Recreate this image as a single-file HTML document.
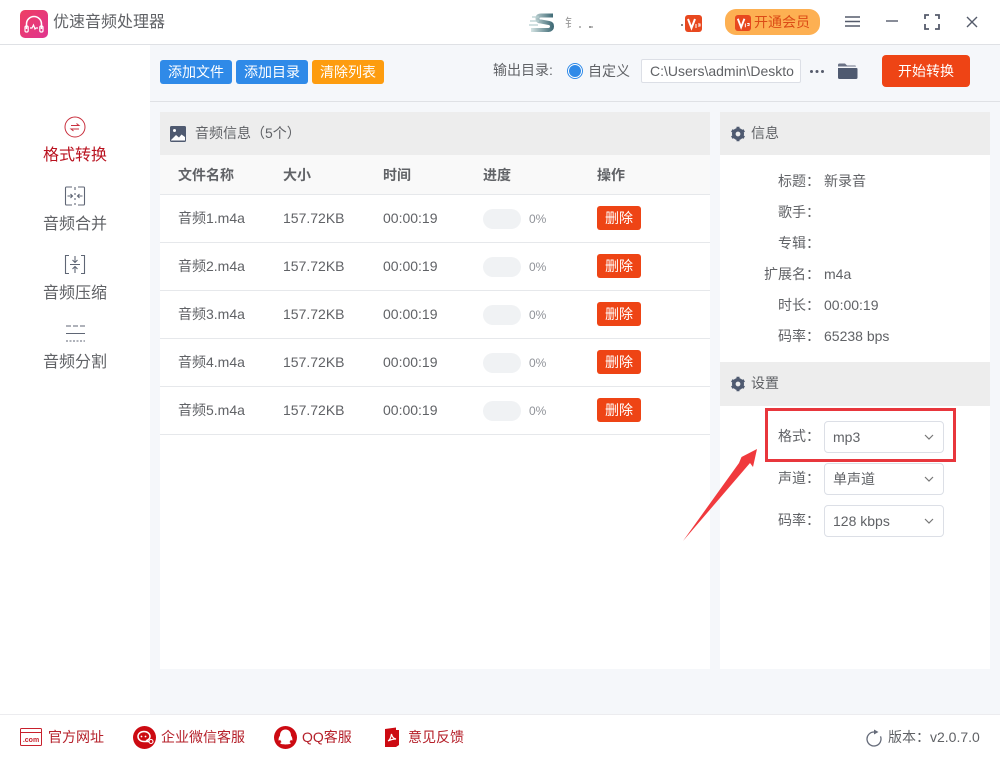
<!DOCTYPE html>
<html lang="zh-CN"><head><meta charset="utf-8"><title>优速音频处理器</title>
<style>
*{box-sizing:border-box}
html,body{margin:0;padding:0}
body{width:1000px;height:760px;position:relative;overflow:hidden;background:#f5f7fa;font-family:"Liberation Sans","Noto Sans CJK SC",sans-serif;font-size:14px;color:#606266}
.a,.t{position:absolute}
.t{white-space:nowrap;line-height:20px}
.btn{position:absolute;border-radius:3px;color:#fff;text-align:center;font-size:14px;white-space:nowrap}
.del{position:absolute;left:597px;width:44px;height:24px;line-height:24px;background:#ee4415;color:#fff;border-radius:3px;font-size:14px;text-align:center}
.track{position:absolute;left:483px;width:38px;height:20px;border-radius:10px;background:#f0f2f4}
.pct{position:absolute;left:529px;font-size:12px;color:#909399;line-height:20px}
.line{position:absolute;left:160px;width:550px;height:1px;background:#e6e8eb}
.sel{position:absolute;left:824px;width:120px;height:32px;background:#fff;border:1px solid #dcdfe6;border-radius:4px;line-height:30px;padding-left:8px;color:#606266}
.sel svg{position:absolute;right:9px;top:11px}
.nav{position:absolute;left:0;width:150px;text-align:center;font-size:16px;line-height:22px;color:#606266}
.lab{position:absolute;width:60px;text-align:right;left:760px;line-height:20px;white-space:nowrap}
.foot{position:absolute;top:727px;line-height:20px;color:#b5202a;font-size:14px;white-space:nowrap}
</style></head><body>

<div class="a" style="left:0;top:0;width:1000px;height:45px;background:#fff;border-bottom:1px solid #dfe1e5"></div>
<div class="a" style="left:0;top:45px;width:150px;height:669px;background:#fff"></div>
<div class="a" style="left:150px;top:101px;width:850px;height:1px;background:#dfe1e5"></div>

<!-- logo -->
<svg class="a" style="left:20px;top:10px" width="28" height="28" viewBox="0 0 28 28"><defs><linearGradient id="g" x1="0" y1="0" x2="1" y2="1"><stop offset="0" stop-color="#ee3f62"/><stop offset="1" stop-color="#e0348f"/></linearGradient><linearGradient id="s" x1="0" y1="0" x2="1" y2="0"><stop offset="0" stop-color="#d5e4e4"/><stop offset="1" stop-color="#3f6a75"/></linearGradient></defs><rect width="28" height="28" rx="5" fill="url(#g)"/><path d="M6.500 19v-5a7.500 7.500 0 0 1 15 0v5" fill="none" stroke="#fff" stroke-width="1.500"/><rect x="5" y="16" width="3.200" height="6" rx="1.400" fill="none" stroke="#fff" stroke-width="1.200"/><rect x="19.800" y="16" width="3.200" height="6" rx="1.400" fill="none" stroke="#fff" stroke-width="1.200"/><path d="M10 18h2l1.500-3 1.500 4 1-1h2" fill="none" stroke="#fff" stroke-width="1.200"/></svg>
<div class="t" style="left:53px;top:13px;font-size:16px;color:#606266">优速音频处理器</div>

<!-- account -->
<svg class="a" style="left:527px;top:12px" width="30" height="22" viewBox="0 0 30 22"><path d="M26 3.500H14Q10.500 3.500 10.500 6.500T14 9.500l8 1.500q3 .5 3 3.500t-3.500 3.500H4" fill="none" stroke="url(#s)" stroke-width="4"/><path d="M5 5h7M3 9h9M2 13h9" stroke="#b6cfd0" stroke-width="1.300"/></svg>
<div class="t" style="left:565px;top:13px;font-size:12px;color:#999">钅</div>
<div class="a" style="left:579px;top:26px;width:2px;height:2px;background:#bbb"></div>
<div class="a" style="left:589px;top:26px;width:2px;height:2px;background:#999"></div>
<div class="a" style="left:591px;top:26px;width:2px;height:2px;background:#bbb"></div>
<div class="a" style="left:681px;top:24px;width:2px;height:2px;background:#888"></div>
<svg class="a" style="left:685px;top:15px" width="17" height="17" viewBox="0 0 17 17"><rect width="17" height="17" rx="3" fill="#e8481f"/><path d="M3 4l3.500 9 3.500-9" fill="none" stroke="#fff" stroke-width="2"/><path d="M11 9v4M13 9h2v2h-2" fill="none" stroke="#fff" stroke-width="1"/></svg>

<!-- vip pill -->
<div class="a" style="left:725px;top:9px;width:95px;height:26px;border-radius:11px;background:#fdb052"></div>
<svg class="a" style="left:735px;top:15px" width="16" height="16" viewBox="0 0 17 17"><rect width="17" height="17" rx="3" fill="#e8481f"/><path d="M3 4l3.500 9 3.500-9" fill="none" stroke="#fff" stroke-width="2"/><path d="M11 9v4M13 9h2v2h-2" fill="none" stroke="#fff" stroke-width="1"/></svg>
<div class="t" style="left:754px;top:12px;font-size:14px;color:#dc4b16">开通会员</div>

<!-- window controls -->
<svg class="a" style="left:840px;top:10px" width="145" height="24" viewBox="0 0 145 24" fill="none" stroke="#555b6b" stroke-width="1.400">
<path d="M5 7h15M5 11.500h15M5 16h15"/>
<path d="M46 11h12"/>
<path d="M85 9V5h4M95 5h4v4M99 14v5h-4M89 19h-4v-5" stroke-width="1.800"/>
<path d="M127 7l10 10M137 7l-10 10"/>
</svg>

<!-- toolbar -->
<div class="btn" style="left:160px;top:60px;width:72px;height:24px;line-height:24px;background:#2f8ae8">添加文件</div>
<div class="btn" style="left:236px;top:60px;width:72px;height:24px;line-height:24px;background:#2f8ae8">添加目录</div>
<div class="btn" style="left:312px;top:60px;width:72px;height:24px;line-height:24px;background:#fd9c0f">清除列表</div>
<div class="t" style="left:493px;top:60px;font-size:14px">输出目录:</div>
<div class="a" style="left:567px;top:63px;width:16px;height:16px;border-radius:50%;border:1px solid #2f8ae8;background:#fff"></div>
<div class="a" style="left:569px;top:65px;width:12px;height:12px;border-radius:50%;background:#2f8ae8"></div>
<div class="t" style="left:588px;top:61px;font-size:14px">自定义</div>
<div class="a" style="left:641px;top:59px;width:160px;height:24px;background:#fff;border:1px solid #dcdfe6;border-radius:2px;overflow:hidden;line-height:23px;padding-left:8px;white-space:nowrap;color:#606266">C:\Users\admin\Deskto</div>
<div class="a" style="left:810px;top:70px;width:3px;height:3px;background:#555b6b;border-radius:50%;box-shadow:5.500px 0 #555b6b,11px 0 #555b6b"></div>
<svg class="a" style="left:837px;top:62px" width="21" height="18" viewBox="0 0 21 18"><path d="M1 3a1.500 1.500 0 0 1 1.500-1.500H8l2 2h8a1 1 0 0 1 1 1H1z" fill="#6a7285"/><path d="M1 6h18.500a1 1 0 0 1 1 1v8.500a1.500 1.500 0 0 1-1.500 1.500H2.500A1.500 1.500 0 0 1 1 15.500z" fill="#4f5a70"/></svg>
<div class="btn" style="left:882px;top:55px;width:88px;height:32px;line-height:32px;background:#ee4415;border-radius:4px">开始转换</div>

<!-- sidebar -->
<svg class="a" style="left:64px;top:116px" width="22" height="22" viewBox="0 0 22 22" fill="none" stroke="#c9303e" stroke-width="1"><circle cx="11" cy="11" r="10"/><path d="M7 9.500h8L12.500 7.500M15 13H7l2.500 2"/></svg>
<div class="nav" style="top:145px;color:#b9121f">格式转换</div>
<svg class="a" style="left:64px;top:185px" width="22" height="22" viewBox="0 0 22 22" fill="none" stroke="#5f6675" stroke-width="1.100"><path d="M8 2H2.500a1 1 0 0 0-1 1v16a1 1 0 0 0 1 1H8M14 2h5.500a1 1 0 0 1 1 1v16a1 1 0 0 1-1 1H14M11 2v3M11 8v2M11 13v2M11 18v2M3.500 11H8M6.500 9l2 2-2 2M18.500 11H14M15.500 9l-2 2 2 2"/></svg>
<div class="nav" style="top:214px">音频合并</div>
<svg class="a" style="left:64px;top:254px" width="22" height="22" viewBox="0 0 22 22" fill="none" stroke="#5f6675" stroke-width="1.100"><path d="M5 1.500H1.500v18H5M17 1.500h3.500v18H17M6 10.500h10M11 2v6.500M8.500 6l2.500 2.500L13.500 6M11 19v-6.500M8.500 15l2.500-2.500 2.500 2.500"/></svg>
<div class="nav" style="top:283px">音频压缩</div>
<svg class="a" style="left:64px;top:323px" width="22" height="20" viewBox="0 0 22 20" fill="none" stroke="#5f6675" stroke-width="1.100"><path d="M2 3h5M9 3h5M16 3h5M2 10.500h19"/><path d="M2 18h19" stroke-dasharray="2 1.500"/></svg>
<div class="nav" style="top:352px">音频分割</div>

<!-- left panel -->
<div class="a" style="left:160px;top:112px;width:550px;height:557px;background:#fff"></div>
<div class="a" style="left:160px;top:112px;width:550px;height:43px;background:#ededed"></div>
<div class="a" style="left:160px;top:155px;width:550px;height:39px;background:#f9f9f9"></div>
<svg class="a" style="left:170px;top:126px" width="16" height="16" viewBox="0 0 16 16"><rect width="16" height="16" rx="1.500" fill="#4f5a70"/><circle cx="4.500" cy="4.500" r="1.500" fill="#fff"/><path d="M1 14l5-5 3 2.500 2.500-3L15 11v3.500H1z" fill="#fff"/></svg>
<div class="t" style="left:195px;top:123px;font-size:14px">音频信息（5个）</div>

<div class="t" style="left:178px;top:165px;font-weight:bold">文件名称</div>
<div class="t" style="left:283px;top:165px;font-weight:bold">大小</div>
<div class="t" style="left:383px;top:165px;font-weight:bold">时间</div>
<div class="t" style="left:483px;top:165px;font-weight:bold">进度</div>
<div class="t" style="left:597px;top:165px;font-weight:bold">操作</div>
<div class="line" style="top:194px"></div>

<div class="t" style="left:178px;top:208px">音频1.m4a</div><div class="t" style="left:283px;top:208px">157.72KB</div><div class="t" style="left:383px;top:208px">00:00:19</div><div class="track" style="top:209px"></div><div class="pct" style="top:209px">0%</div><div class="del" style="top:206px">删除</div><div class="line" style="top:242px"></div>
<div class="t" style="left:178px;top:256px">音频2.m4a</div><div class="t" style="left:283px;top:256px">157.72KB</div><div class="t" style="left:383px;top:256px">00:00:19</div><div class="track" style="top:257px"></div><div class="pct" style="top:257px">0%</div><div class="del" style="top:254px">删除</div><div class="line" style="top:290px"></div>
<div class="t" style="left:178px;top:304px">音频3.m4a</div><div class="t" style="left:283px;top:304px">157.72KB</div><div class="t" style="left:383px;top:304px">00:00:19</div><div class="track" style="top:305px"></div><div class="pct" style="top:305px">0%</div><div class="del" style="top:302px">删除</div><div class="line" style="top:338px"></div>
<div class="t" style="left:178px;top:352px">音频4.m4a</div><div class="t" style="left:283px;top:352px">157.72KB</div><div class="t" style="left:383px;top:352px">00:00:19</div><div class="track" style="top:353px"></div><div class="pct" style="top:353px">0%</div><div class="del" style="top:350px">删除</div><div class="line" style="top:386px"></div>
<div class="t" style="left:178px;top:400px">音频5.m4a</div><div class="t" style="left:283px;top:400px">157.72KB</div><div class="t" style="left:383px;top:400px">00:00:19</div><div class="track" style="top:401px"></div><div class="pct" style="top:401px">0%</div><div class="del" style="top:398px">删除</div><div class="line" style="top:434px"></div>

<!-- right panel -->
<div class="a" style="left:720px;top:112px;width:270px;height:557px;background:#fff"></div>
<div class="a" style="left:720px;top:112px;width:270px;height:43px;background:#ededed"></div>
<div class="a" style="left:720px;top:362px;width:270px;height:44px;background:#ededed"></div>
<svg class="a" style="left:730px;top:126px" width="16" height="16" viewBox="0 0 16 16"><circle cx="8" cy="8" r="4.200" fill="none" stroke="#4f5a70" stroke-width="3.600"/><path d="M8 3.500V.8M8 12.500v2.700M4.100 5.750L1.800 4.400M11.900 10.250l2.300 1.350M4.100 10.250L1.800 11.600M11.900 5.750l2.300-1.350" stroke="#4f5a70" stroke-width="3"/></svg>
<div class="t" style="left:751px;top:123px;font-size:14px">信息</div>
<svg class="a" style="left:730px;top:376px" width="16" height="16" viewBox="0 0 16 16"><circle cx="8" cy="8" r="4.200" fill="none" stroke="#4f5a70" stroke-width="3.600"/><path d="M8 3.500V.8M8 12.500v2.700M4.100 5.750L1.800 4.400M11.900 10.250l2.300 1.350M4.100 10.250L1.800 11.600M11.900 5.750l2.300-1.350" stroke="#4f5a70" stroke-width="3"/></svg>
<div class="t" style="left:751px;top:373px;font-size:14px">设置</div>

<div class="lab" style="top:171px">标题：</div><div class="t" style="left:824px;top:171px">新录音</div>
<div class="lab" style="top:202px">歌手：</div>
<div class="lab" style="top:233px">专辑：</div>
<div class="lab" style="top:264px">扩展名：</div><div class="t" style="left:824px;top:264px">m4a</div>
<div class="lab" style="top:295px">时长：</div><div class="t" style="left:824px;top:295px">00:00:19</div>
<div class="lab" style="top:326px">码率：</div><div class="t" style="left:824px;top:326px">65238 bps</div>

<div class="lab" style="top:426px">格式：</div>
<div class="sel" style="top:421px">mp3<svg width="10" height="8" viewBox="0 0 10 8" fill="none" stroke="#777" stroke-width="1.200"><path d="M1 2l4 4 4-4"/></svg></div>
<div class="lab" style="top:468px">声道：</div>
<div class="sel" style="top:463px">单声道<svg width="10" height="8" viewBox="0 0 10 8" fill="none" stroke="#777" stroke-width="1.200"><path d="M1 2l4 4 4-4"/></svg></div>
<div class="lab" style="top:510px">码率：</div>
<div class="sel" style="top:505px">128 kbps<svg width="10" height="8" viewBox="0 0 10 8" fill="none" stroke="#777" stroke-width="1.200"><path d="M1 2l4 4 4-4"/></svg></div>

<!-- annotation -->
<div class="a" style="left:765px;top:408px;width:191px;height:54px;border:3px solid #e8363c"></div>
<svg class="a" style="left:675px;top:440px" width="90" height="105" viewBox="675 440 90 105"><path d="M683 541L739 463 741.500 457 757 449 753 467 750 463z" fill="#f0393d"/></svg>

<!-- footer -->
<div class="a" style="left:0;top:714px;width:1000px;height:46px;background:#fff;border-top:1px solid #ececef"></div>
<svg class="a" style="left:20px;top:728px" width="23" height="19" viewBox="0 0 23 19" fill="none" stroke="#c8202c" stroke-width="1"><rect x=".5" y=".5" width="21" height="17" rx="1"/><path d="M1 4.500h20"/><text x="11" y="14" font-size="7" font-weight="bold" text-anchor="middle" fill="#c8202c" stroke="none" font-family="Liberation Sans,sans-serif">.com</text></svg>
<div class="foot" style="left:48px">官方网址</div>
<svg class="a" style="left:133px;top:726px" width="23" height="23" viewBox="0 0 23 23"><circle cx="11.500" cy="11.500" r="11.500" fill="#cc0a12"/><path d="M11 5.500c-3.500 0-6 2.200-6 5s2.500 5 6 5h4.500l-1.500-1.200c2-1 3-2.300 3-3.800 0-2.800-2.500-5-6-5z" fill="none" stroke="#fff" stroke-width="1.500"/><circle cx="8.500" cy="10.500" r=".9" fill="#fff"/><circle cx="12.500" cy="10.500" r=".9" fill="#fff"/><circle cx="18" cy="15.500" r="2" fill="#cc0a12" stroke="#fff" stroke-width="1.100"/></svg>
<div class="foot" style="left:161px">企业微信客服</div>
<svg class="a" style="left:274px;top:726px" width="23" height="23" viewBox="0 0 23 23"><circle cx="11.500" cy="11.500" r="11.500" fill="#cc0a12"/><path d="M11.500 3.500c3.500 0 5.500 2.500 5.500 6 1 1.500 1.800 3.500 1.200 5.200l-1.400-1c-.4 1-.8 1.800-1.400 2.400.8.300 1.400.8 1.400 1.200 0 .8-2.800 1.200-5.300 1.200s-5.300-.4-5.300-1.200c0-.4.600-.9 1.400-1.200-.6-.6-1-1.400-1.400-2.400l-1.400 1c-.6-1.700.2-3.700 1.200-5.200 0-3.500 2-6 5.500-6z" fill="#fff"/></svg>
<div class="foot" style="left:302px">QQ客服</div>
<svg class="a" style="left:384px;top:727px" width="16" height="21" viewBox="0 0 16 21"><path d="M1 2l11-1.500V3h3v15l-3 2H1z" fill="#cc0a12"/><path d="M4 14c2-1 3-4 3.500-7 .5 3 2 4.500 4.500 5-3 0-5 .5-8 2z" fill="none" stroke="#fff" stroke-width="1.200"/></svg>
<div class="foot" style="left:408px">意见反馈</div>
<svg class="a" style="left:866px;top:729px" width="17" height="18" viewBox="0 0 17 18" fill="none" stroke="#666c7a" stroke-width="1.300"><path d="M8 3a7 7 0 1 0 6.500 4.400"/><path d="M8 .5l4.500 2.500L8 5.500z" fill="#666c7a" stroke="none"/></svg>
<div class="t" style="left:888px;top:727px;color:#606266">版本：v2.0.7.0</div>

</body></html>
